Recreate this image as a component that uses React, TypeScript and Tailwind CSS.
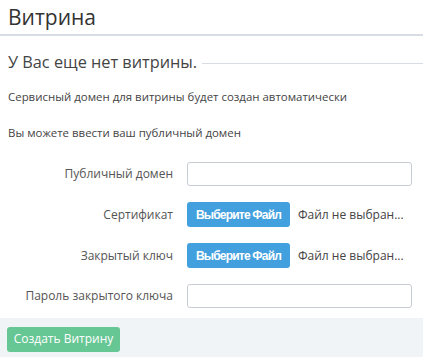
import React from "react";

const FileRow = ({ label }: { label: string }) => (
  <div className="flex items-center h-[25px]">
    <div className="w-[173px] text-right text-[12px] text-[#555]">{label}</div>
    <div className="ml-[14px] flex items-center">
      <button className="h-[25px] w-[103px] rounded-[3px] bg-[#43a0de] text-white text-[12px] font-bold tracking-[-0.8px] font-['Liberation_Sans',sans-serif]">
        Выберите Файл
      </button>
      <span className="ml-[8px] text-[12px] text-[#444]">Файл не выбран...</span>
    </div>
  </div>
);

const InputRow = ({ label }: { label: string }) => (
  <div className="flex items-center h-[24px]">
    <div className="w-[173px] text-right text-[12px] text-[#555]">{label}</div>
    <input className="ml-[14px] h-[24px] w-[225px] rounded-[3px] border border-[#c8ccd4] bg-white outline-none" />
  </div>
);

export default function App() {
  return (
    <div className="w-[423px] h-[357px] bg-white font-['Open_Sans',sans-serif] text-[#333] flex flex-col overflow-hidden">
      <div className="px-[8px] pt-[2px] h-[34px] text-[21px] leading-[30px] text-[#333]">Витрина</div>
      <div className="h-[2px] bg-[#d8dce3]" />
      <div className="flex items-center mt-[15px] pl-[8px]">
        <span className="text-[16.3px] leading-[22px] text-[#444]">У Вас еще нет витрины.</span>
        <div className="flex-1 h-px bg-[#d8dce3] ml-[5px] mt-[2px]" />
      </div>
      <div className="pl-[8px] mt-[16px] text-[11.45px] leading-[16px] text-[#444]">
        Сервисный домен для витрины будет создан автоматически
      </div>
      <div className="pl-[8px] mt-[20px] text-[11.45px] leading-[16px] text-[#444]">
        Вы можете ввести ваш публичный домен
      </div>
      <div className="flex flex-col gap-[16px] mt-[21px]">
        <InputRow label="Публичный домен" />
        <FileRow label="Сертификат" />
        <FileRow label="Закрытый ключ" />
        <InputRow label="Пароль закрытого ключа" />
      </div>
      <div className="mt-[10px] flex-1 bg-[#f0f4f7] px-[7px] pt-[7px]">
        <button className="h-[25px] w-[113px] rounded-[3px] bg-[#66c694] text-white text-[12px]">
          Создать Витрину
        </button>
      </div>
    </div>
  );
}
